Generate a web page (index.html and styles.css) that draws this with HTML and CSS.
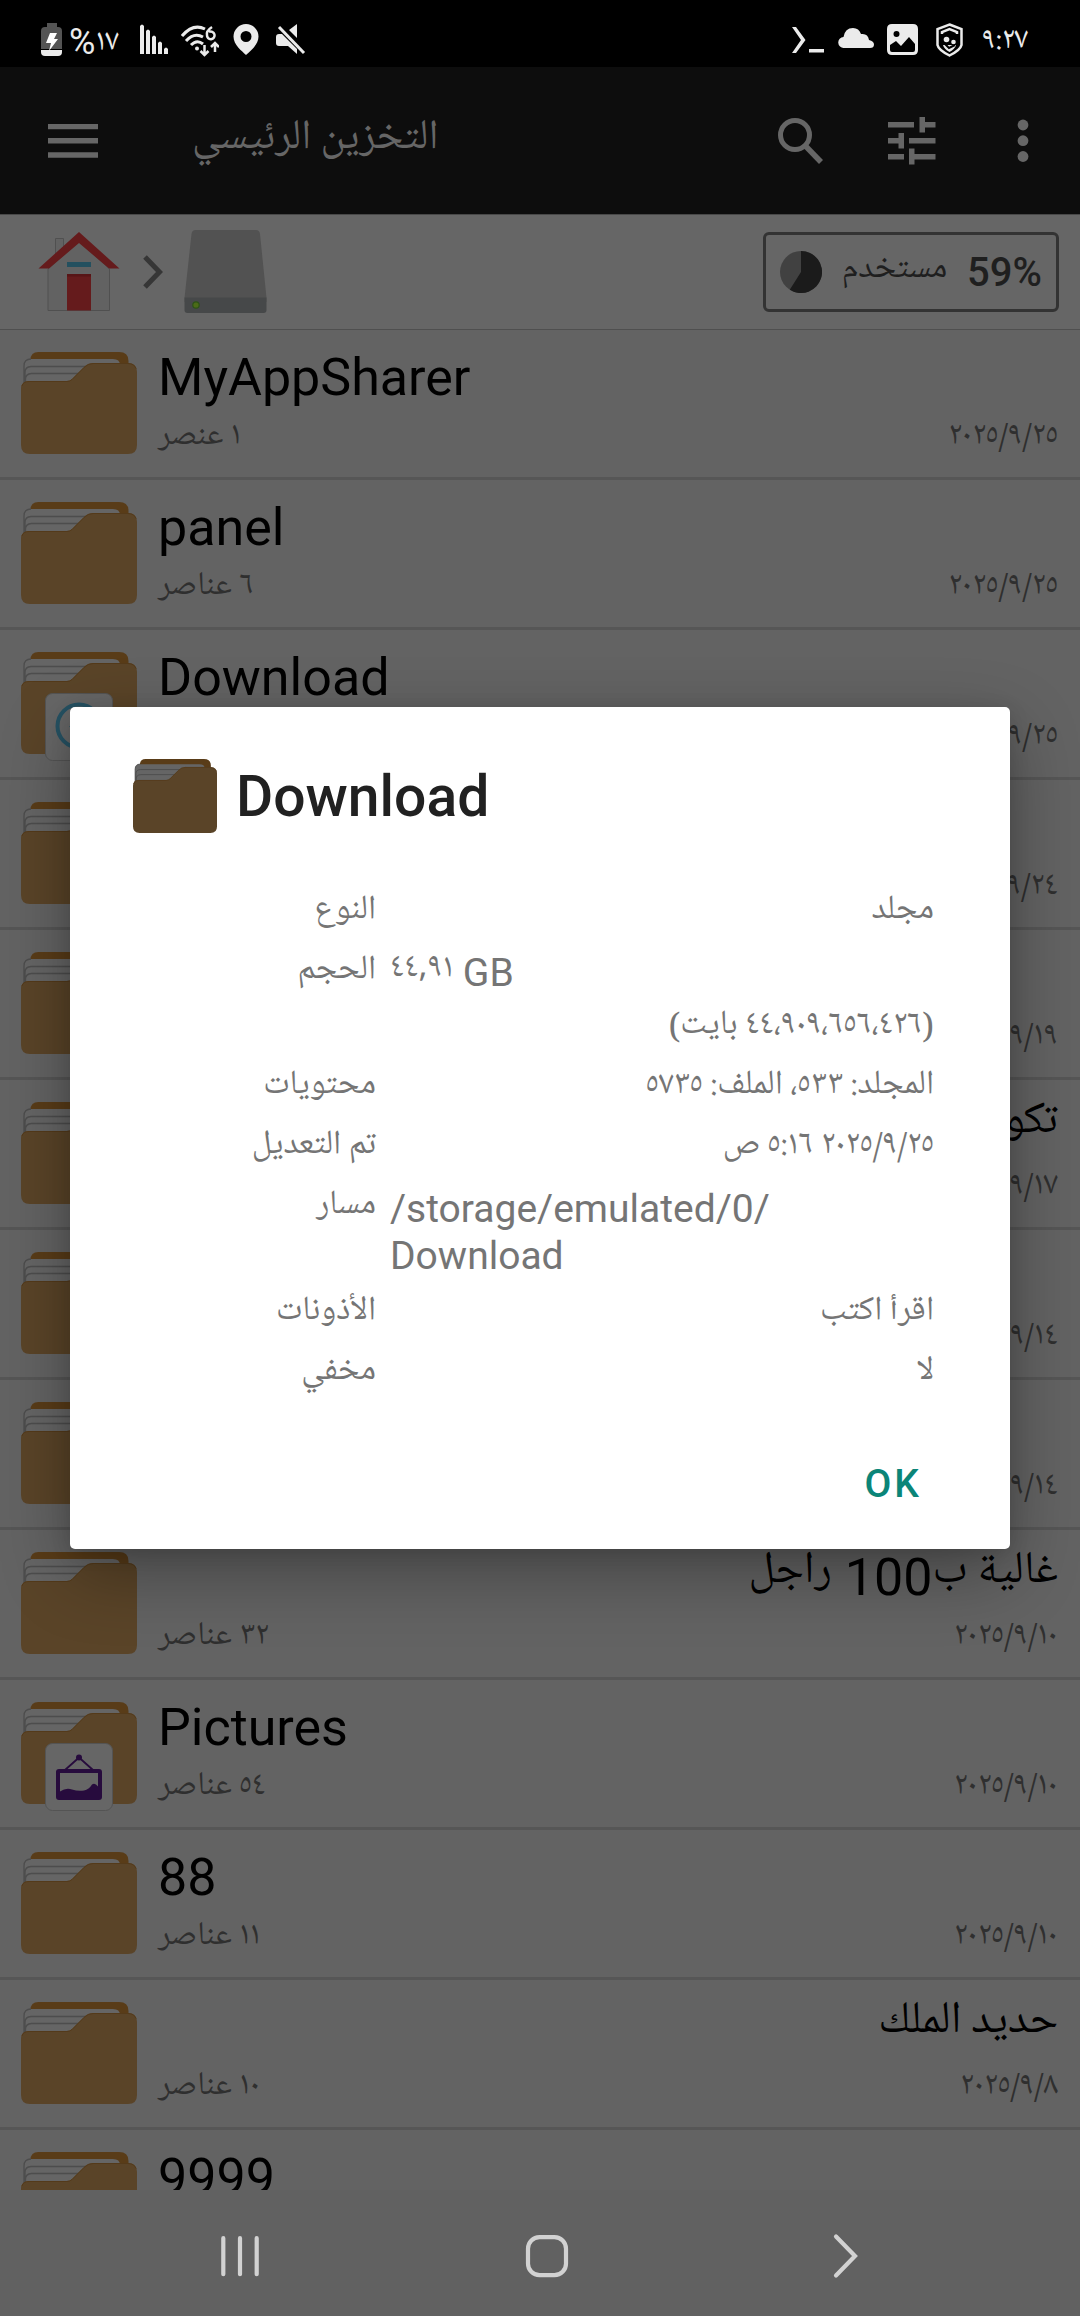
FILE: index.html
```html
<!DOCTYPE html>
<html lang="ar">
<head>
<meta charset="utf-8">
<title>التخزين الرئيسي</title>
<link rel="stylesheet" href="styles.css">
</head>
<body>
<svg class="defs" width="0" height="0" aria-hidden="true">
  <symbol id="folder" viewBox="0 0 116 102">
    <path class="f-back" d="M9.500 20V8q0-8 8-8H98q9.500 0 9.500 9V20z"/>
    <path class="f-paper" d="M3 36V14q0-7 7-7H92q7 0 7 6V36z"/>
    <path class="f-line" d="M3 36V14q0-7 7-7M4 36V20q0-5 6-5.500H66M4.500 36V27q0-5 6-5.500H60"/>
    <path class="f-front" d="M0 37q0-8 8-8H46q3 0 5-2L63 15q4-4 9-4H107q9 0 9 9V93q0 9-9 9H9q-9 0-9-9z"/>
    <path class="f-edge" d="M1 34q1-4.500 7-4.500H46q3 0 5-2L63 15.500q4-4 9-4H107q6 0 8 5"/>
  </symbol>
</svg>
<div class="screen">
  <header class="status">
    <svg width="22" height="34" viewBox="0 0 22 34" class="s-batt"><path fill="#545454" d="M6 0h10v4h1q4 0 4 4v18H0V8q0-4 4-4h2z"/><path fill="#ebebeb" d="M0 27h21v2q0 4-4 4H4q-4 0-4-4z"/><path fill="#fff" d="M9 10h7l-3 6h4L8 28l2-8H5z"/></svg>
    <span class="s-pct" dir="ltr">%<span class="num">١٧</span></span>
    <svg width="28" height="30" viewBox="0 0 28 30" class="s-sig"><path fill="#ebebeb" d="M0 2q2-3 4 0V30H0zM6 7q2-3 4 0V30H6zM12 13q2-3 4 0V30h-4zM18 19q2-3 4 0V30h-4zM24 25q2-3 4 0V30h-4z"/></svg>
    <svg width="38" height="32" viewBox="0 0 38 32" class="s-wifi" fill="none" stroke="#ebebeb" stroke-width="3"><path d="M1 11Q12-2 24 4M5 16q8-9 17-4M10 20q6-6 12-1"/><path d="M31 2q-6 4-5 8a3.800 3.800 0 1 0 2-3" stroke-width="2.500"/><path d="M23.500 20v10M19.500 26l4 4 4-4M34 27V18M30 22l4-4 4 4" stroke-width="2.500"/><circle cx="16" cy="23.500" r="2" fill="#ebebeb" stroke="none"/></svg>
    <svg width="26" height="32" viewBox="0 0 26 32" class="s-pin"><path fill="#ebebeb" fill-rule="evenodd" d="M13 0a12.500 12.500 0 0 1 12.500 12.500C25.500 21 17 27 13 31 9 27 .5 21 .5 12.500A12.500 12.500 0 0 1 13 0zm0 7a5.500 5.500 0 1 0 0 11 5.500 5.500 0 0 0 0-11z"/></svg>
    <svg width="30" height="31" viewBox="0 0 30 31" class="s-mute"><path fill="#ebebeb" d="M21 0v14L13 6zM0 13q0-3 3-3h3L21 25v5l-9-8H3q-3 0-3-3z"/><path d="M3 3l25 26" stroke="#ebebeb" stroke-width="3"/></svg>
    <span class="grow"></span>
    <svg width="34" height="28" viewBox="0 0 34 28" class="s-term"><path d="M1 1h4l9.500 13L5 27H1l9-13zM18 23h15v3.500H18z" fill="#ebebeb"/></svg>
    <svg width="36" height="20" viewBox="0 0 36 20" class="s-cloud"><path fill="#ebebeb" d="M6 20A5.500 5.500 0 0 1 5.500 9Q7 0 15 0q6 0 8 6 7-1 8 6 5 1 5 4.500 0 3.500-4 3.500z"/></svg>
    <svg width="31" height="31" viewBox="0 0 31 31" class="s-img"><path fill="#ebebeb" fill-rule="evenodd" d="M5 0h21q5 0 5 5v21q0 5-5 5H5q-5 0-5-5V5q0-5 5-5zM9.500 7a3 3 0 1 0 0 6 3 3 0 0 0 0-6zM3 21v5q0 2 2 2h21q2 0 2-2v-6l-6-7-8 9-5-5z"/></svg>
    <svg width="27" height="34" viewBox="0 0 27 34" class="s-shield" fill="none" stroke="#ebebeb" stroke-width="2.500"><path d="M13.500 1.500L25.500 6v16q-1 5-12 10.500Q2.500 27 1.500 22V6z"/><path d="M6 11V9l7.500-3L21 9v2"/><path d="M7 22h13q-1 4-6.500 7Q8 26 7 22z" fill="#ebebeb" stroke="none"/><circle cx="10.500" cy="16.500" r="2.800" fill="#ebebeb" stroke="none"/><circle cx="17.500" cy="19" r="2.300" fill="#ebebeb" stroke="none"/><path d="M9 21l4 4 6-3" stroke="#000" stroke-width="2"/></svg>
    <span class="s-time num" dir="ltr">٩:٢٧</span>
  </header>

  <div class="appbar">
    <svg width="50" height="34" viewBox="0 0 50 34" class="a-menu"><path fill="#666" d="M0 0h50v5.300H0zM0 14h50v5.500H0zM0 28.200h50v5.500H0z"/></svg>
    <h1 class="title" dir="rtl">التخزين الرئيسي</h1>
    <span class="grow"></span>
    <svg width="46" height="46" viewBox="0 0 46 46" class="a-search" fill="none" stroke="#666"><circle cx="17" cy="17" r="14.500" stroke-width="5"/><path d="M28 28.500L43 44" stroke-width="5.500"/></svg>
    <svg width="48" height="48" viewBox="0 0 48 48" class="a-tune"><path fill="#666" d="M0 5h26v5.500H0zM31.500 0H37v5h10.500v5.500H37V15.500h-5.500zM0 21h10.500v-5H16v15.500h-5.500v-5H0zM21 21h26.500v5.500H21zM0 37h16v5.500H0zM21 31.500h5.500V37h21v5.500h-21v5H21z"/></svg>
    <svg width="12" height="44" viewBox="0 0 12 44" fill="#666"><circle cx="6" cy="6" r="5.400"/><circle cx="6" cy="21.700" r="5.400"/><circle cx="6" cy="37.500" r="5.400"/></svg>
  </div>

  <nav class="crumbs">
    <svg width="82" height="80" viewBox="0 0 82 80" class="c-home"><path fill="#626262" stroke="#505050" stroke-width="1" d="M17.500 26V6.500H25.500V20zM10 37L41 9l30.500 28v41.500H10z"/><path fill="#651b1c" d="M41 0l40.500 36.500H71L41 11 11 36.500H.500z"/><path fill="#24505f" d="M29 30h24v5H29z"/><path fill="#651b1c" d="M29 42h24v36.500H29z"/><path fill="#571516" d="M29 42h24v2.500H29z"/></svg>
    <svg width="20" height="34" viewBox="0 0 20 34" class="c-sep"><path d="M2 2l14.500 15L2 32" fill="none" stroke="#363636" stroke-width="5"/></svg>
    <svg width="84" height="84" viewBox="0 0 84 84" class="c-drive"><path fill="#525252" d="M7.500 4q.5-4 4-4H72q3.500 0 4 4L82.500 68V72H.500V68z"/><path fill="#464849" d="M.500 67.500h82V80q0 3-3 3h-76q-3 0-3-3z"/><circle cx="12" cy="75" r="3.200" fill="#4b6b17" stroke="#2d5218" stroke-width="1.200"/></svg>
    <span class="grow"></span>
    <div class="usage" dir="rtl">
      <b class="pct">59%</b><span class="used">مستخدم</span>
      <svg width="42" height="42" viewBox="0 0 42 42"><circle cx="21" cy="21" r="21" fill="#414141"/><path fill="#1b1b1b" d="M21 21V0a21 21 0 1 1-11.250 38.700z"/></svg>
    </div>
  </nav>

  <main class="list">
    <div class="row"><svg class="folder"><use href="#folder"/></svg><div class="info"><div class="name">MyAppSharer</div><div class="meta"><span dir="rtl">١ عنصر</span><time class="num">٢٠٢٥/٩/٢٥</time></div></div></div>
    <div class="row"><svg class="folder"><use href="#folder"/></svg><div class="info"><div class="name">panel</div><div class="meta"><span dir="rtl">٦ عناصر</span><time class="num">٢٠٢٥/٩/٢٥</time></div></div></div>
    <div class="row"><svg class="folder"><use href="#folder"/></svg>
      <svg class="badge" viewBox="0 0 68 68"><rect x=".5" y=".5" width="67" height="67" rx="7" fill="#666" stroke="#545454"/><circle cx="34" cy="33" r="21.500" fill="none" stroke="#265263" stroke-width="4"/><path fill="#265263" d="M24 33h6V22h8v11h6L34 45z"/></svg>
      <div class="info"><div class="name">Download</div><div class="meta"><span></span><time class="num">٢٠٢٥/٩/٢٥</time></div></div></div>
    <div class="row"><svg class="folder"><use href="#folder"/></svg><div class="info"><div class="name"></div><div class="meta"><span></span><time class="num">٢٠٢٥/٩/٢٤</time></div></div></div>
    <div class="row"><svg class="folder"><use href="#folder"/></svg><div class="info"><div class="name"></div><div class="meta"><span></span><time class="num">٢٠٢٥/٩/١٩</time></div></div></div>
    <div class="row"><svg class="folder"><use href="#folder"/></svg><div class="info"><div class="name" dir="rtl"><span class="ar">تكوين</span></div><div class="meta"><span></span><time class="num">٢٠٢٥/٩/١٧</time></div></div></div>
    <div class="row"><svg class="folder"><use href="#folder"/></svg><div class="info"><div class="name"></div><div class="meta"><span></span><time class="num">٢٠٢٥/٩/١٤</time></div></div></div>
    <div class="row"><svg class="folder"><use href="#folder"/></svg><div class="info"><div class="name"></div><div class="meta"><span></span><time class="num">٢٠٢٥/٩/١٤</time></div></div></div>
    <div class="row"><svg class="folder"><use href="#folder"/></svg><div class="info"><div class="name" dir="rtl"><span class="ar">غالية ب</span>100 <span class="ar">راجل</span></div><div class="meta"><span dir="rtl">٣٢ عناصر</span><time class="num">٢٠٢٥/٩/١٠</time></div></div></div>
    <div class="row"><svg class="folder"><use href="#folder"/></svg>
      <svg class="badge" viewBox="0 0 68 68"><rect x=".5" y=".5" width="67" height="67" rx="7" fill="#666" stroke="#545454"/><g fill="#270b3d"><circle cx="34" cy="14.500" r="3"/><path fill-rule="evenodd" d="M14 26h40q3 0 3 3v25q0 3-3 3H14q-3 0-3-3V29q0-3 3-3zm1 4v18.500q6-4 12-2t12 1q5-1 8-6 3-2 6 2V30z"/></g><path d="M20 27L34 14.500 48 27" fill="none" stroke="#270b3d" stroke-width="1.800"/></svg>
      <div class="info"><div class="name">Pictures</div><div class="meta"><span dir="rtl">٥٤ عناصر</span><time class="num">٢٠٢٥/٩/١٠</time></div></div></div>
    <div class="row"><svg class="folder"><use href="#folder"/></svg><div class="info"><div class="name">88</div><div class="meta"><span dir="rtl">١١ عناصر</span><time class="num">٢٠٢٥/٩/١٠</time></div></div></div>
    <div class="row"><svg class="folder"><use href="#folder"/></svg><div class="info"><div class="name" dir="rtl"><span class="ar">حديد الملك</span></div><div class="meta"><span dir="rtl">١٠ عناصر</span><time class="num">٢٠٢٥/٩/٨</time></div></div></div>
    <div class="row"><svg class="folder"><use href="#folder"/></svg><div class="info"><div class="name">9999</div></div></div>
  </main>

  <footer class="navbar">
    <svg width="40" height="44" viewBox="0 0 40 44"><path d="M3.300 4.200v36M20 4.200v36M36.700 4.200v36"/></svg>
    <svg width="44" height="44" viewBox="0 0 44 44"><rect x="3" y="3.200" width="38" height="38" rx="11.500"/></svg>
    <svg width="26" height="46" viewBox="0 0 26 46"><path d="M3 3.500L22 23 3 42.500"/></svg>
  </footer>

  <section class="dialog">
    <div class="d-head"><svg class="folder bright"><use href="#folder"/></svg><h2>Download</h2></div>
    <dl class="props">
      <dt>النوع</dt><dd>مجلد</dd>
      <dt>الحجم</dt><dd class="size"><div class="lat" dir="ltr"><span class="ar">٤٤,٩١</span> GB</div><div>(٤٤،٩٠٩،٦٥٦،٤٢٦ بايت)</div></dd>
      <dt>محتويات</dt><dd>المجلد: ٥٣٣، الملف: ٥٧٣٥</dd>
      <dt>تم التعديل</dt><dd>٢٠٢٥/٩/٢٥ ٥:١٦ ص</dd>
      <dt>مسار</dt><dd class="path lat" dir="ltr">/storage/emulated/0/<br>Download</dd>
      <dt>الأذونات</dt><dd>اقرأ اكتب</dd>
      <dt>مخفي</dt><dd>لا</dd>
    </dl>
    <button class="ok">OK</button>
  </section>
</div>
</body>
</html>
```
FILE: styles.css
```css
* { box-sizing: border-box; margin: 0; padding: 0; }
:root { --arabic: "Noto Naskh Arabic UI", "Noto Naskh Arabic", "Noto Sans Arabic", "DejaVu Sans", sans-serif; }
body { width: 1080px; height: 2316px; overflow: hidden; background: #636363; font-family: Roboto, "DejaVu Sans", sans-serif; }
.defs { position: absolute; }
svg { display: block; flex: none; }
.screen { position: relative; width: 1080px; height: 2316px; display: flex; flex-direction: column; overflow: hidden; }
.grow { flex: 1; }
.num { font-family: var(--arabic); }

.status { flex: none; height: 67px; background: #000; color: #ebebeb; display: flex; align-items: flex-start; padding: 23px 42px 0 41px; }
.s-pct { width: 57px; margin: 5px 14px 0 6px; font-size: 36px; line-height: 28px; white-space: nowrap; }
.s-pct .num { font-size: 31px; line-height: 0; }
.s-sig { margin: 1px 13px 0 0; }
.s-wifi { margin: 2px 14px 0 0; }
.s-pin { margin: 1px 17px 0 0; }
.s-mute { margin-top: 1px; }
.s-term { margin: 3px 13px 0 0; }
.s-cloud { margin: 5px 13px 0 0; }
.s-img { margin: 1px 18px 0 0; }
.s-shield { margin-right: 19px; }
.s-time { width: 56px; font-size: 31px; line-height: 34px; white-space: nowrap; }

.appbar { flex: none; height: 147px; background: #0d0d0d; display: flex; align-items: center; padding: 0 51px 0 48px; }
.title { margin: -6px 0 0 94px; font: 400 42px/60px var(--arabic); color: #666; white-space: nowrap; }
.a-search { margin-right: 64px; }
.a-tune { margin-right: 81px; }

.crumbs { flex: none; height: 116px; background: #666; border-top: 1px solid #484848; border-bottom: 1px solid #4f4f4f; display: flex; align-items: center; padding: 0 21px 0 38px; }
.c-sep { margin-left: 23px; }
.c-drive { margin-left: 21px; }
.usage { width: 296px; height: 80px; border: 3px solid #333; border-radius: 6px; display: flex; align-items: center; justify-content: space-between; padding: 0 14px; color: #1f1f1f; }
.pct { font-size: 40px; font-weight: 500; }
.used { font: 34px/40px var(--arabic); margin-top: -7px; }

.list { flex: none; height: 1860px; overflow: hidden; }
.row { position: relative; height: 150px; border-bottom: 3px solid #565656; display: flex; padding: 18px 22px 0 21px; }
.folder { width: 116px; height: 102px; margin-top: 4px; }
.f-back { fill: #593c18; }
.f-paper { fill: #656565; }
.f-line { fill: none; stroke: #4d4d4d; stroke-width: 1.3; }
.f-front { fill: #5a4428; }
.f-edge { fill: none; stroke: #543a1a; }
.badge { position: absolute; left: 45px; top: 63px; width: 68px; height: 68px; }
.info { flex: 1; margin-left: 21px; }
.name { height: 60px; font-size: 52px; line-height: 60px; color: #000; white-space: nowrap; }
.ar { font-family: var(--arabic); font-size: 45px; line-height: 0; vertical-align: 7px; }
.meta { margin-top: 8px; display: flex; justify-content: space-between; font: 33px/40px var(--arabic); color: #2f2f2f; }

.navbar { flex: none; height: 126px; background: #616161; display: flex; align-items: center; padding: 5px 221px 0 220px; justify-content: space-between; }
.navbar svg { fill: none; stroke: #d2d2d2; stroke-width: 4.2; stroke-linecap: round; }

.dialog { position: absolute; left: 70px; top: 707px; width: 940px; height: 842px; background: #fff; border-radius: 5px; box-shadow: 0 24px 70px rgba(0,0,0,.32), 0 4px 20px rgba(0,0,0,.12); display: flex; flex-direction: column; }
.d-head { display: flex; padding: 52px 63px 0; }
.bright { width: 84px; height: 74px; margin: 0; --x: 0; }
.bright { filter: none; }
h2 { margin: 0 0 0 19px; font-size: 57px; font-weight: 500; line-height: 76px; color: #212121; }
.props { margin-top: 45px; display: grid; grid-template-columns: 306px 544px; column-gap: 14px; grid-template-rows: 60px 115px 60px 60px 106px 60px 60px; font: 34px/60px var(--arabic); color: #757575; direction: ltr; white-space: nowrap; }
.props dt, .props dd { direction: rtl; text-align: right; }
.props .lat { font: 39px/47px Roboto, sans-serif; direction: ltr; text-align: left; }
.props .path { padding-top: 11px; }
.size .lat { padding-top: 10px; height: 57px; }
.size { line-height: 56px; }
.size .ar { font-size: 34px; vertical-align: 5px; }
.ok { margin: 60px 88px 0 auto; border: 0; background: none; font: 500 39px/46px Roboto, sans-serif; letter-spacing: 3px; color: #0b8578; }
```
